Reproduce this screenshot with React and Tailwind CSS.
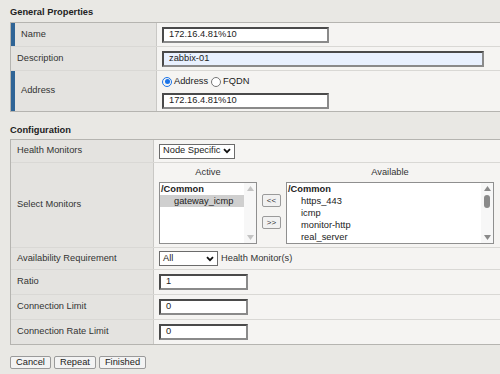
import React from 'react';

const font = { fontFamily: '"Liberation Sans", Arial, sans-serif' };

function TextBox({ value, className = '', blue = false }) {
  return (
    <div
      className={`h-[16px] shrink-0 border-2 border-t-[#4a4a4a] border-l-[#4a4a4a] border-b-[#8a8a8a] border-r-[#8a8a8a] px-[5px] flex items-center text-[9.3px] leading-none text-[#222] ${blue ? 'bg-[#e8f0fe]' : 'bg-white'} ${className}`}
    >
      {value}
    </div>
  );
}

function Chevron() {
  return (
    <svg width="8" height="6" viewBox="0 0 8 6" className="shrink-0">
      <path d="M1 1.2 L4 4.2 L7 1.2" stroke="#111" strokeWidth="1.8" fill="none" />
    </svg>
  );
}

function SelectBox({ value, className = '' }) {
  return (
    <div className={`h-[15px] shrink-0 border border-[#6b6b6b] bg-white flex items-center justify-between pl-[3px] pr-[3px] text-[9.3px] leading-none text-[#222] ${className}`}>
      <span className="whitespace-nowrap">{value}</span>
      <Chevron />
    </div>
  );
}

function Scrollbar({ thumb = false }) {
  const c = thumb ? '#8a8a8a' : '#c4c4c4';
  return (
    <div className="w-[12px] h-full flex flex-col items-center py-[3px] bg-[#f7f7f7]">
      <svg width="7" height="5" viewBox="0 0 7 5"><path d="M0 5 L3.5 0 L7 5 Z" fill={c} /></svg>
      {thumb ? <div className="w-[6px] h-[13px] rounded-[3px] bg-[#8a8a8a] mt-[4px]" /> : null}
      <div className="flex-1" />
      <svg width="7" height="5" viewBox="0 0 7 5"><path d="M0 0 L3.5 5 L7 0 Z" fill={c} /></svg>
    </div>
  );
}

function ListBox({ items, selected, thumb, className = '' }) {
  return (
    <div className={`h-[62px] border border-[#8f8f8f] bg-white flex ${className}`}>
      <div className="flex-1 text-[9.3px] leading-[12px] text-[#222] overflow-hidden whitespace-nowrap">
        <div className="font-bold pl-[1px]">/Common</div>
        {items.map((it) => (
          <div key={it} className={`pl-[14px] ${selected === it ? 'bg-[#cfcfcf]' : ''}`}>{it}</div>
        ))}
      </div>
      <Scrollbar thumb={thumb} />
    </div>
  );
}

function MoveButton({ label }) {
  return (
    <div className="w-[19px] h-[13px] border border-[#9a9a9a] rounded-[2px] bg-[#f1f1f1] flex items-center justify-center text-[8px] leading-none text-[#333]">
      {label}
    </div>
  );
}

function Row({ label, required = false, labelW, h, children, last = false }) {
  return (
    <div className={`flex w-full ${last ? '' : 'border-b border-[#d9d8d5]'}`} style={{ height: h }}>
      <div
        className={`flex items-center shrink-0 bg-[#e4e3e0] border-r border-[#c9c8c5] text-[9.3px] text-[#333] whitespace-nowrap ${required ? 'border-l-[4px] border-l-[#2f6496] pl-[6px]' : 'pl-[6px]'}`}
        style={{ width: labelW }}
      >
        {label}
      </div>
      <div className="flex-1 bg-[#f5f4f2] pl-[5px] flex flex-col justify-center items-start">{children}</div>
    </div>
  );
}

export default function App() {
  return (
    <div className="w-[500px] h-[374px] overflow-hidden bg-[#e9e8e4] pl-[10px]" style={font}>
      <div className="pt-[7px] h-[22px] text-[9.3px] font-bold text-[#222] leading-[11px]">General Properties</div>
      <div className="w-[500px] min-w-[500px] border-l border-b border-t border-[#b5b4b0]">
        <Row label="Name" required labelW={146} h={24}>
          <TextBox value="172.16.4.81%10" className="w-[167px]" />
        </Row>
        <Row label="Description" labelW={146} h={24}>
          <TextBox value="zabbix-01" className="w-[322px]" blue />
        </Row>
        <Row label="Address" required labelW={146} h={40} last>
          <div className="flex items-center gap-[2px] text-[9.3px] text-[#222] leading-none h-[12px] mt-[2px]">
            <span className="w-[10px] h-[10px] rounded-full border-[1.5px] border-[#1a73e8] flex items-center justify-center">
              <span className="w-[5px] h-[5px] rounded-full bg-[#1a73e8]" />
            </span>
            <span>Address</span>
            <span className="w-[10px] h-[10px] rounded-full border border-[#767676] bg-white ml-[1px]" />
            <span>FQDN</span>
          </div>
          <TextBox value="172.16.4.81%10" className="w-[167px] mt-[5px]" />
        </Row>
      </div>

      <div className="pt-[13px] h-[27px] text-[9.3px] font-bold text-[#222] leading-[11px]">Configuration</div>
      <div className="w-[500px] min-w-[500px] border-l border-b border-t border-[#b5b4b0]">
        <Row label="Health Monitors" labelW={143} h={23}>
          <SelectBox value="Node Specific" className="w-[76px]" />
        </Row>
        <Row label="Select Monitors" labelW={143} h={85}>
          <div className="flex items-start text-[9.3px] text-[#333]">
            <div className="flex flex-col">
              <div className="text-center leading-[12px] mb-[4px]">Active</div>
              <ListBox items={['gateway_icmp']} selected="gateway_icmp" className="w-[98px]" />
            </div>
            <div className="flex flex-col gap-[9px] ml-[5px] mr-[5px] mt-[28px]">
              <MoveButton label="<<" />
              <MoveButton label=">>" />
            </div>
            <div className="flex flex-col">
              <div className="text-center leading-[12px] mb-[4px]">Available</div>
              <ListBox items={['https_443', 'icmp', 'monitor-http', 'real_server']} thumb className="w-[208px]" />
            </div>
          </div>
        </Row>
        <Row label="Availability Requirement" labelW={143} h={22}>
          <div className="flex items-center gap-[3px] text-[9.3px] text-[#333]">
            <SelectBox value="All" className="w-[59px]" />
            <span>Health Monitor(s)</span>
          </div>
        </Row>
        <Row label="Ratio" labelW={143} h={25}>
          <TextBox value="1" className="w-[89px]" />
        </Row>
        <Row label="Connection Limit" labelW={143} h={25}>
          <TextBox value="0" className="w-[89px]" />
        </Row>
        <Row label="Connection Rate Limit" labelW={143} h={24} last>
          <TextBox value="0" className="w-[89px]" />
        </Row>
      </div>

      <div className="flex gap-[3px] mt-[11px]">
        {['Cancel', 'Repeat', 'Finished'].map((b) => (
          <div key={b} className="h-[13px] px-[5px] border border-[#9a9a9a] rounded-[2px] bg-[#f3f3f3] text-[9.3px] leading-none text-[#222] flex items-center">
            {b}
          </div>
        ))}
      </div>
    </div>
  );
}
